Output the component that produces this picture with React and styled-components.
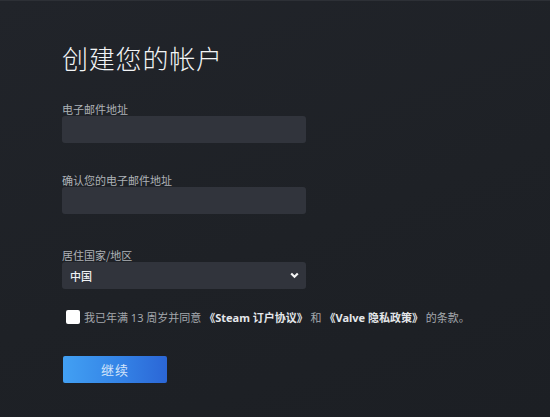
import React from 'react';
import styled, { createGlobalStyle } from 'styled-components';

const GlobalStyle = createGlobalStyle`
  html, body {
    margin: 0;
    padding: 0;
    background: #1e2127;
  }
  body {
    font-family: "Noto Sans", "Noto Sans CJK SC", sans-serif;
  }
`;

const Page = styled.div`
  width: 550px;
  height: 417px;
  box-sizing: border-box;
  border-top: 1px solid #2d3036;
  background: linear-gradient(160deg, #21242a 0%, #1e2126 55%, #1c1f24 100%);
  padding: 39px 0 0 62px;
  overflow: hidden;
`;

const Title = styled.h1`
  margin: 0 0 26px;
  font-family: "Noto Sans CJK SC", sans-serif;
  font-weight: 300;
  font-size: 26px;
  line-height: 36px;
  color: #f2f4f6;
  letter-spacing: 0.8px;
`;

const Field = styled.div`
  width: 244px;
  margin-bottom: ${(p) => p.$space}px;
`;

const Label = styled.label`
  display: block;
  font-family: "Noto Sans CJK SC", sans-serif;
  font-size: 11px;
  line-height: 14px;
  color: #aeb2b7;
`;

const TextInput = styled.input`
  display: block;
  width: 100%;
  height: 27px;
  box-sizing: border-box;
  border: none;
  border-radius: 3px;
  background: #31343c;
  outline: none;
  color: #fff;
  padding: 0 8px;
`;

const SelectBox = styled.div`
  display: flex;
  align-items: center;
  justify-content: space-between;
  height: 27px;
  box-sizing: border-box;
  padding: 0 7px 0 8px;
  border-radius: 3px;
  background: #31343c;
  font-family: "Noto Sans CJK SC", sans-serif;
  font-size: 11px;
  font-weight: 500;
  color: #eef0f2;
`;

const Agree = styled.div`
  display: flex;
  align-items: center;
  gap: 4px;
  margin: 0 0 30px 4px;
  font-family: "Noto Sans", "Noto Sans CJK SC", sans-serif;
  font-size: 11px;
  line-height: 16px;
  color: #a4a8ad;
`;

const Check = styled.input`
  appearance: none;
  width: 14px;
  height: 14px;
  margin: -3px 0 0;
  border-radius: 2px;
  background: #fff;
`;

const Strong = styled.span`
  font-weight: 700;
  color: #e4e7ea;
`;

const Button = styled.button`
  width: 104px;
  height: 27px;
  margin-left: 1px;
  border: none;
  border-radius: 2px;
  background: linear-gradient(90deg, #42a0f3 0%, #3483e6 55%, #2b66d6 100%);
  font-family: "Noto Sans CJK SC", sans-serif;
  font-size: 13px;
  color: #d4e5fa;
  letter-spacing: 1px;
  cursor: pointer;
`;

const Chevron = () => (
  <svg width="9" height="7" viewBox="0 0 9 7">
    <polyline points="1.2,1.5 4.5,4.8 7.8,1.5" fill="none" stroke="#f4f4f4" strokeWidth="2.2" />
  </svg>
);

export default function App() {
  return (
    <Page>
      <GlobalStyle />
      <Title>创建您的帐户</Title>
      <Field $space={30}>
        <Label>电子邮件地址</Label>
        <TextInput type="email" />
      </Field>
      <Field $space={34}>
        <Label>确认您的电子邮件地址</Label>
        <TextInput type="email" />
      </Field>
      <Field $space={21}>
        <Label>居住国家/地区</Label>
        <SelectBox>
          <span>中国</span>
          <Chevron />
        </SelectBox>
      </Field>
      <Agree>
        <Check type="checkbox" />
        <span>
          我已年满 13 周岁并同意 <Strong>《Steam 订户协议》</Strong> 和 <Strong>《Valve 隐私政策》</Strong> 的条款。
        </span>
      </Agree>
      <Button>继续</Button>
    </Page>
  );
}
